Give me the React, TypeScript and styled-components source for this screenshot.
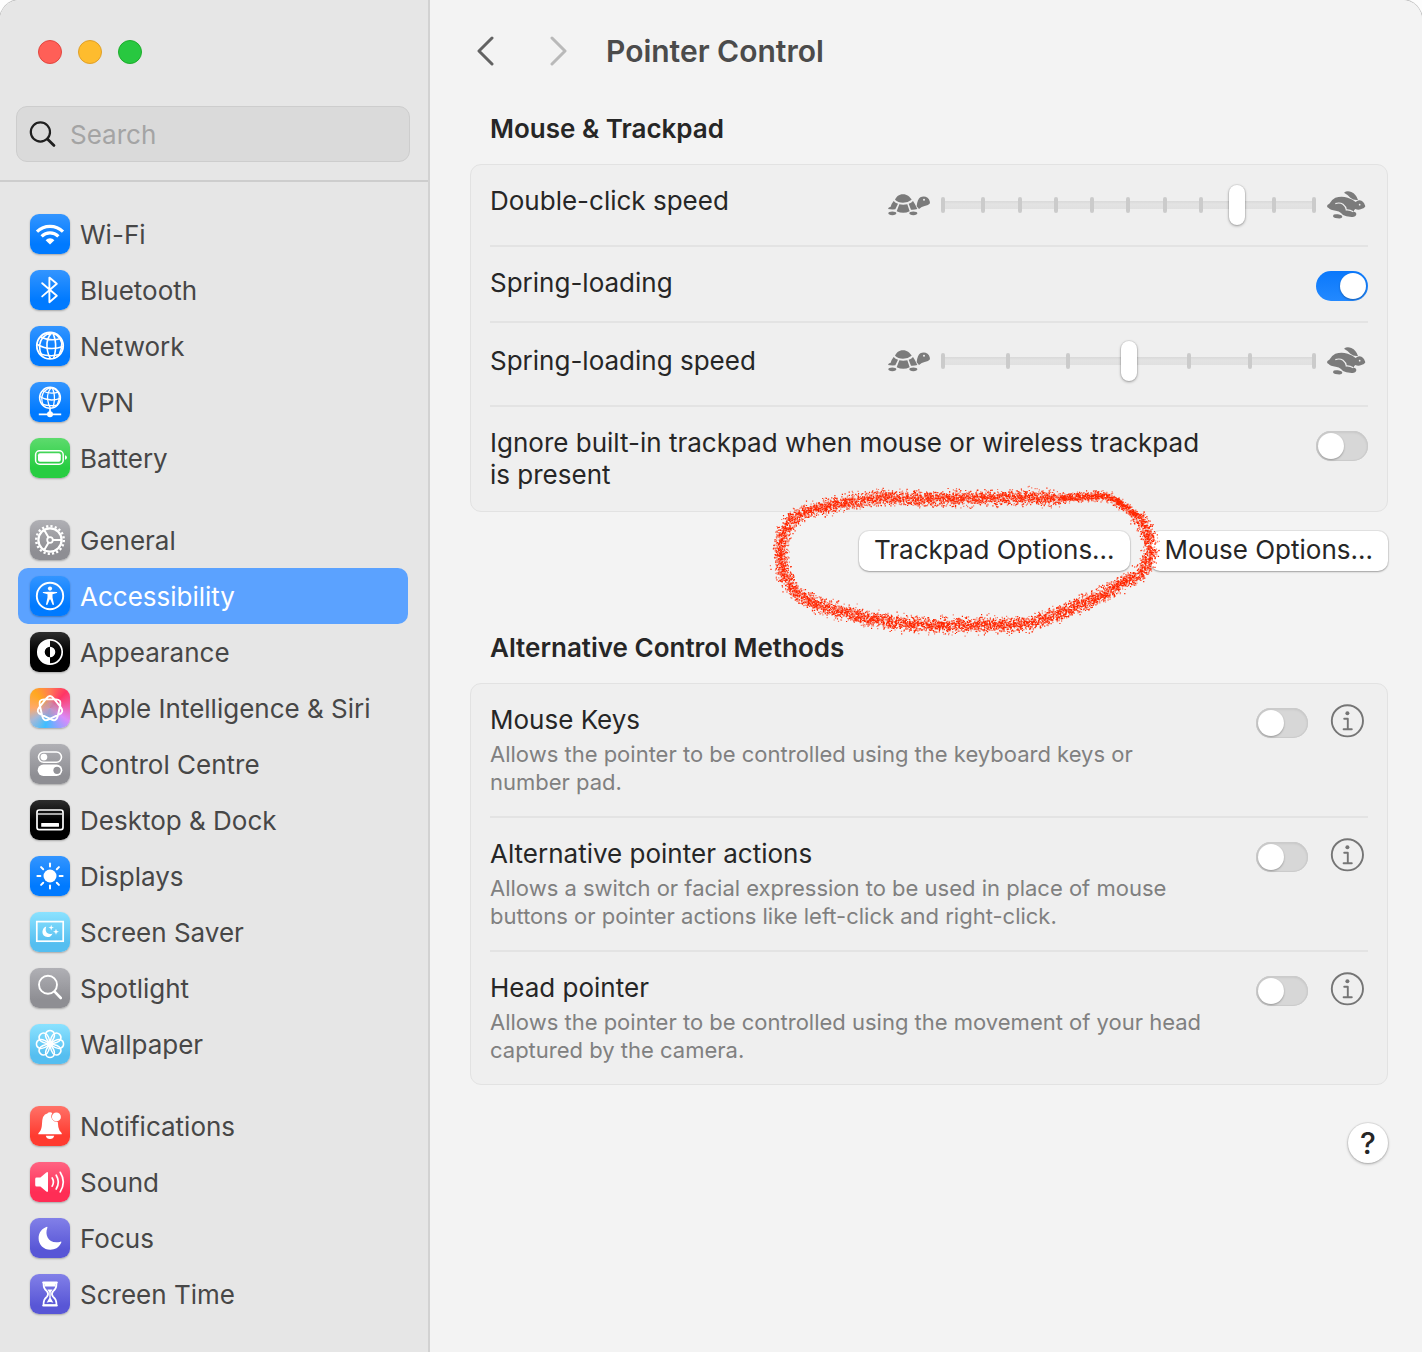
import React, { useState } from "react";
import styled, { createGlobalStyle, css } from "styled-components";

const GlobalStyle = createGlobalStyle`
  *, *::before, *::after { box-sizing: border-box; }
  body {
    margin: 0;
    background: #fdfdfd;
    font-family: Inter, "Liberation Sans", sans-serif;
    font-size: 26px;
    line-height: 32px;
    color: #262626;
  }
  button, input { font: inherit; color: inherit; }
  h1, h2, p, ul { margin: 0; padding: 0; }
`;

/* ---------- window ---------- */

const Window = styled.div`
  display: grid;
  grid-template-columns: 430px 1fr;
  min-height: 100vh;
  border-radius: 20px 20px 0 0;
  overflow: hidden;
  box-shadow: 0 0 0 1px #c4c4c4;
`;

const Sidebar = styled.aside`
  display: flex;
  flex-direction: column;
  background: #e6e6e6;
  border-right: 2px solid #d2d2d2;
`;

const Lights = styled.div`
  display: flex;
  gap: 16px;
  padding: 40px 38px 0;
`;

const Light = styled.button<{ $fill: string; $edge: string }>`
  width: 24px;
  height: 24px;
  padding: 0;
  border: 1px solid ${(p) => p.$edge};
  border-radius: 50%;
  background: ${(p) => p.$fill};
`;

const SearchBox = styled.label`
  display: flex;
  align-items: center;
  gap: 12px;
  height: 56px;
  margin: 42px 18px 18px 16px;
  padding: 0 12px;
  border: 1px solid #cdcdcd;
  border-radius: 11px;
  background: #dadada;
`;

const SearchInput = styled.input`
  flex: 1;
  min-width: 0;
  padding: 2px 0 0;
  border: 0;
  outline: 0;
  background: transparent;
  appearance: none;
  &::placeholder { color: #a4a4a4; opacity: 1; }
`;

const Nav = styled.nav`
  display: flex;
  flex-direction: column;
  gap: 26px;
  padding: 24px 20px 30px 18px;
  border-top: 2px solid #cdcdcd;
`;

const NavGroup = styled.ul`
  list-style: none;
`;

const NavLink = styled.a<{ $active?: boolean }>`
  display: flex;
  align-items: center;
  gap: 10px;
  height: 56px;
  padding: 0 12px;
  border-radius: 10px;
  color: ${(p) => (p.$active ? "#fff" : "#474747")};
  background: ${(p) => (p.$active ? "#5ba2ff" : "transparent")};
  text-decoration: none;
  white-space: nowrap;
`;

const NavText = styled.span`
  padding-top: 2px;
`;

const Tile = styled.svg<{ $bg: string }>`
  flex: none;
  width: 40px;
  height: 40px;
  border-radius: 9px;
  background: ${(p) => p.$bg};
  box-shadow: 0 1px 2px rgba(0, 0, 0, 0.28);
`;

/* ---------- content ---------- */

const Content = styled.main`
  min-width: 0;
  padding: 0 34px 40px 40px;
  background: #f3f3f3;
`;

const TitleBar = styled.header`
  display: flex;
  align-items: center;
  height: 102px;
`;

const NavButton = styled.button`
  display: flex;
  justify-content: center;
  align-items: center;
  width: 32px;
  height: 40px;
  margin-right: 40px;
  padding: 0;
  border: 0;
  background: none;
  color: #626262;
  &:disabled { color: #b9b9b9; }
`;

const Title = styled.h1`
  margin-left: -8px;
  font-size: 30px;
  line-height: 36px;
  font-weight: 600;
  color: #4b4b4b;
`;

const Section = styled.section`
  & + & { margin-top: 50px; }
`;

const SectionTitle = styled.h2`
  padding: 11px 20px 19px;
  font-size: 26px;
  line-height: 32px;
  font-weight: 600;
`;

const Card = styled.div`
  padding: 0 19px;
  border: 1px solid #e2e2e2;
  border-radius: 11px;
  background: #efefef;
`;

const Row = styled.div<{ $centered?: boolean }>`
  display: flex;
  align-items: flex-start;
  justify-content: space-between;
  gap: 24px;
  padding: 20px 0;
  ${(p) => p.$centered && css`
    align-items: center;
    padding: 18px 0 24px;
  `}
  & + & { border-top: 2px solid #e3e3e3; }
`;

const RowText = styled.div`
  display: flex;
  flex-direction: column;
  gap: 4px;
  max-width: 720px;
`;

const RowLabel = styled.label``;

const Description = styled.p`
  font-size: 22px;
  line-height: 28px;
  color: #808080;
`;

const Controls = styled.div`
  display: flex;
  flex: none;
  gap: 22px;
`;

const Toggle = styled.input`
  flex: none;
  width: 52px;
  height: 30px;
  margin: 4px 0 0;
  padding: 2px;
  border-radius: 15px;
  appearance: none;
  background: #d7d7d7;
  box-shadow: inset 0 0 0 1px #cbcbcb, inset 0 1px 3px rgba(0, 0, 0, 0.12);
  &::before {
    content: "";
    display: block;
    width: 26px;
    height: 26px;
    border-radius: 50%;
    background: #fff;
    box-shadow: 0 1px 2px rgba(0, 0, 0, 0.3);
  }
  &:checked {
    background: linear-gradient(#0a78fb, #2389ff);
    box-shadow: none;
  }
  &:checked::before { margin-left: 22px; }
`;

const InfoButton = styled.button`
  display: flex;
  width: 38px;
  height: 34px;
  padding: 0;
  border: 0;
  background: none;
  color: #757575;
`;

const SpeedControl = styled.div`
  display: flex;
  flex: none;
  align-items: center;
  gap: 9px;
  color: #7b7b7b;
`;

const SliderBox = styled.div`
  display: grid;
  align-items: center;
  width: 379px;
  height: 40px;
  & > * { grid-area: 1 / 1; }
`;

const Track = styled.div`
  height: 8px;
  margin: 0 3px;
  border-radius: 2px;
  background: linear-gradient(#d9d9d9, #e3e3e3 40%, #e0e0e0);
`;

const Ticks = styled.div`
  display: flex;
  justify-content: space-between;
  padding: 0 2px;
`;

const Tick = styled.span`
  width: 4px;
  height: 16px;
  border-radius: 2px;
  background: #cbcbcb;
  &:first-child { margin-right: 4px; }
  &:last-child { margin-left: 4px; }
`;

const Range = styled.input`
  width: 100%;
  height: 40px;
  margin: 0;
  appearance: none;
  background: transparent;
  &::-webkit-slider-thumb {
    appearance: none;
    width: 16px;
    height: 40px;
    border-radius: 8px;
    background: #fff;
    box-shadow: 0 0 0 1px rgba(0, 0, 0, 0.06), 0 1px 3px rgba(0, 0, 0, 0.35);
  }
`;

const ButtonRow = styled.div`
  position: relative;
  display: flex;
  justify-content: flex-end;
  gap: 20px;
  margin-top: 19px;
`;

const PushButton = styled.button`
  height: 40px;
  padding: 0 15px 2px;
  border: 0;
  border-radius: 10px;
  background: #fff;
  box-shadow: 0 0 0 1px rgba(0, 0, 0, 0.06), 0 1px 2px rgba(0, 0, 0, 0.3);
  white-space: nowrap;
`;

const Crayon = styled.svg`
  position: absolute;
  top: -51px;
  right: 228px;
  width: 400px;
  height: 160px;
  pointer-events: none;
`;

const Footer = styled.footer`
  display: flex;
  justify-content: flex-end;
  padding-top: 38px;
`;

const HelpButton = styled.button`
  width: 40px;
  height: 40px;
  padding: 0;
  border: 0;
  border-radius: 50%;
  background: #fff;
  box-shadow: 0 0 0 1px rgba(0, 0, 0, 0.06), 0 1px 3px rgba(0, 0, 0, 0.3);
  font-size: 30px;
  font-weight: 500;
`;

/* ---------- icons ---------- */

const BLUE = "linear-gradient(#3395ff, #007aff 75%)";
const GREEN = "linear-gradient(#5ddb6d, #27cd41 75%)";
const GREY = "linear-gradient(#b0b0b5, #8e8e93 80%)";
const BLACK = "linear-gradient(#2e2e2e, #000 50%)";
const SKY = "linear-gradient(#8be2ff, #55bef0 80%)";
const RED = "linear-gradient(#ff7268, #ff3b30 75%)";
const PINK = "linear-gradient(#ff6482, #ff2d55 75%)";
const INDIGO = "linear-gradient(#8280e8, #5856d6 80%)";
const SIRI =
  "radial-gradient(circle at 50% 52%, rgba(190,150,190,.75) 0 18%, transparent 42%), conic-gradient(from 0deg at 50% 50%, #ff7a55, #ff3565 45deg, #f060a8 85deg, #d98bfa 125deg, #7fa8ff 165deg, #3ebeff 195deg, #a5b8d8 235deg, #ffa96a 270deg, #ffa820 315deg, #ff7a55)";

const Globe = () => (
  <g fill="none" stroke="#fff" strokeWidth="1.6">
    <circle cx="20" cy="19.7" r="13.2" strokeWidth="1.8" />
    <path d="M10.5 10.8Q19 15.8 31.2 12.5M6.9 18.2Q19 25.5 33.1 20.5M9.5 27.8Q20 31.2 29.8 28.6" />
    <path d="M21.5 6.6Q11 9.5 9.5 19.5Q9.3 25 12 30M22 6.6Q16 12 17 22Q18 29 20.5 32.8M22.5 6.6Q26 13 25.6 22Q25 29 23.5 32.5M23 6.8Q30.5 11 31.8 17Q32 23 29 29" />
  </g>
);

const knot = (() => {
  const pts = Array.from({ length: 7 }, (_, i) => {
    const a = -Math.PI / 2 + (i * 4 * Math.PI) / 7;
    return [20 + 14.8 * Math.cos(a), 20.6 + 14.8 * Math.sin(a)];
  });
  const mix = (a: number[], b: number[], t: number) =>
    `${(a[0] + (b[0] - a[0]) * t).toFixed(2)} ${(a[1] + (b[1] - a[1]) * t).toFixed(2)}`;
  return (
    pts
      .map((p, i) => {
        const prev = pts[(i + 6) % 7];
        const next = pts[(i + 1) % 7];
        return `${i ? "L" : "M"}${mix(p, prev, 0.25)}Q${mix(p, p, 0)} ${mix(p, next, 0.25)}`;
      })
      .join("") + "Z"
  );
})();

const eighths = [0, 45, 90, 135, 180, 225, 270, 315];

const glyphs: Record<string, React.ReactNode> = {
  wifi: (
    <g fill="none" stroke="#fff" strokeWidth="3.2">
      <path d="M7 17.6A18.6 18.6 0 0 1 33 17.6M11.6 22.3A12 12 0 0 1 28.4 22.3" />
      <path d="M20 30.4L15.6 26.2A6.2 6.2 0 0 1 24.4 26.2Z" fill="#fff" stroke="none" />
    </g>
  ),
  bluetooth: (
    <path d="M12.2 13.2L26.8 25.8L19.4 32.2V7.6L26.8 13.8L12.2 26.4" fill="none" stroke="#fff" strokeWidth="1.9" strokeLinejoin="round" strokeLinecap="round" />
  ),
  network: <Globe />,
  vpn: (
    <>
      <g transform="translate(4.2 .2) scale(.79)"><Globe /></g>
      <path d="M20 26.5V31M8.8 32.3H31.2" stroke="#fff" strokeWidth="1.7" />
      <circle cx="20" cy="32.2" r="3" fill="#fff" />
    </>
  ),
  battery: (
    <>
      <rect x="5.6" y="12.8" width="27.6" height="13.4" rx="4" fill="none" stroke="#fff" strokeWidth="1.5" />
      <rect x="8" y="15.2" width="22.8" height="8.6" rx="2" fill="#fff" />
      <path d="M35 17.3Q36.9 17.8 36.9 19.5T35 21.7Z" fill="#fff" />
    </>
  ),
  general: (
    <g fill="none" stroke="#fff">
      <circle cx="20" cy="20" r="11.6" strokeWidth="2.2" />
      <circle cx="20" cy="20" r="13.8" strokeWidth="2.4" strokeDasharray="2.2 2.135" />
      <circle cx="20" cy="20" r="2.8" strokeWidth="1.8" />
      <path d="M22.8 20H31.5M18.6 17.6L14.2 10M18.6 22.4L14.2 30" strokeWidth="2" />
    </g>
  ),
  accessibility: (
    <>
      <circle cx="20" cy="20" r="13.2" fill="none" stroke="#fff" strokeWidth="1.9" />
      <circle cx="20" cy="12.6" r="2.1" fill="#fff" />
      <path d="M13 15.9L18.4 15.8H21.6L27 15.9Q27.6 16.8 26.8 17.1L22.5 18.2V21.5L24 28.3Q23.6 29.4 22.6 28.7L20.4 23.6H19.6L17.4 28.7Q16.4 29.4 16 28.3L17.5 21.5V18.2L13.2 17.1Q12.4 16.8 13 15.9Z" fill="#fff" />
    </>
  ),
  appearance: (
    <>
      <circle cx="20" cy="20" r="12.2" fill="none" stroke="#fff" strokeWidth="1.7" />
      <path d="M20 7.8A12.2 12.2 0 0 0 20 32.2V25.3A5.3 5.3 0 0 1 20 14.7ZM20 14.7A5.3 5.3 0 0 1 20 25.3Z" fill="#fff" />
    </>
  ),
  siri: <path d={knot} fill="none" stroke="#fff" strokeWidth="1.9" />,
  control: (
    <>
      <rect x="8.5" y="8" width="23" height="10.2" rx="5.1" fill="none" stroke="#fff" strokeWidth="1.6" />
      <circle cx="13.9" cy="13.1" r="3.4" fill="#fff" />
      <rect x="7.7" y="20.6" width="24.6" height="11.4" rx="5.7" fill="#fff" />
      <circle cx="27" cy="26.3" r="3.6" fill="#929297" />
    </>
  ),
  dock: (
    <>
      <rect x="7" y="10" width="26" height="19.6" rx="2.2" fill="none" stroke="#fff" strokeWidth="1.7" />
      <path d="M7.8 14H32.2" stroke="#ddd" strokeWidth="1.7" />
      <rect x="11.2" y="23" width="17.8" height="3.8" rx=".6" fill="#fff" />
    </>
  ),
  displays: (
    <>
      <circle cx="20" cy="20" r="6.5" fill="#fff" />
      {eighths.map((a) => (
        <path key={a} d="M20 7.4V10.4" stroke="#fff" strokeWidth="2" strokeLinecap="round" transform={`rotate(${a} 20 20)`} />
      ))}
    </>
  ),
  saver: (
    <>
      <rect x="6.8" y="9.6" width="26.4" height="19.6" fill="none" stroke="#fff" strokeWidth="1.7" />
      <path d="M16.2 14.4Q14.6 19.6 18 21.6Q20 22.6 22.6 21.4Q21.2 25 17.4 25Q12.6 24.6 12.4 20Q12.6 15.8 16.2 14.4Z" fill="#fff" />
      <path d="M21.2 12.8L21.9 14.9L24 15.6L21.9 16.3L21.2 18.4L20.5 16.3L18.4 15.6L20.5 14.9ZM26 16.8L26.8 19L29 19.8L26.8 20.6L26 22.8L25.2 20.6L23 19.8L25.2 19Z" fill="#fff" />
    </>
  ),
  spotlight: (
    <g fill="none" stroke="#fff" strokeLinecap="round">
      <circle cx="18" cy="16.8" r="9" strokeWidth="1.9" />
      <path d="M24.6 23.6L30.8 30" strokeWidth="2.6" />
    </g>
  ),
  wallpaper: (
    <g fill="none" stroke="#fff" strokeWidth="1.5">
      {eighths.map((a) => (
        <path key={a} d="M20 20Q14.6 13.4 15.7 9.6A4.5 4.5 0 0 1 24.3 9.6Q25.4 13.4 20 20Z" transform={`rotate(${a} 20 20)`} />
      ))}
      <circle cx="20" cy="20" r="2.4" />
    </g>
  ),
  bell: (
    <>
      <path d="M8.3 28.2Q8 27.2 9.2 26.2Q11.6 24 11.9 19Q12 8.2 17.3 7.6Q18.2 6.2 20 6.2Q21.6 6.3 22.3 7.2A5.6 5.6 0 0 0 27.8 15.9Q28 21.5 29.5 24.5L31.4 26.8Q32 27.6 31.7 28.2Z" fill="#fff" />
      <path d="M15.8 29.8H24.2Q23.4 33 20 33T15.8 29.8Z" fill="#fff" />
      <circle cx="26.4" cy="10.9" r="4.5" fill="#fff" />
    </>
  ),
  sound: (
    <>
      <path d="M5.2 17Q5.2 15.6 6.6 15.6H10.4L16.3 10.5Q18 9.4 18 11.2V28.8Q18 30.6 16.3 29.5L10.4 24.6H6.6Q5.2 24.6 5.2 23Z" fill="#fff" />
      <path d="M22.2 16Q24.6 20 22.2 24.2M26.2 13.2Q30.4 20 26.2 27M30.2 10.3Q36.4 20 30.2 29.9" fill="none" stroke="#fff" strokeWidth="1.7" strokeLinecap="round" />
    </>
  ),
  focus: (
    <path d="M17 8.8Q17.8 8.8 17.3 9.9C14.5 17 18.5 26.2 29.8 23.9Q32 23 31.2 24.8C28.7 30 24.8 31.7 20.4 31.7C13.6 31.7 8.6 26.8 8.6 20.2C8.6 14.8 12 10.3 17 8.8Z" fill="#fff" />
  ),
  time: (
    <>
      <path d="M13.2 8.5H26.8M13.2 31.5H26.8" stroke="#fff" strokeWidth="2" strokeLinecap="round" />
      <path d="M13.6 9V11Q13.6 14.5 17 17.4Q19.2 20 17 22.6Q13.6 25.5 13.6 29V31H26.4V29Q26.4 25.5 23 22.6Q20.8 20 23 17.4Q26.4 14.5 26.4 11V9Z" fill="none" stroke="#fff" strokeWidth="1.7" />
      <path d="M14.4 8.8H25.6V12.6H14.4ZM17.4 15.6H22.6L20.7 18.6V24L23.4 28.8Q20 27.2 16.6 28.8L19.3 24V18.6Z" fill="#fff" />
    </>
  ),
};

const Turtle = () => (
  <svg width="42" height="22" viewBox="0 0 126 66" fill="currentColor" aria-hidden="true">
    <path d="M21 17C26 8 32 1 45 1S64 8 71 17Q60 26 45 26T21 17Z" />
    <path d="M17 21Q22 27 30 29L22 46Q10 47 0 45Q1 39 8 38Q11 28 17 21Z" />
    <path d="M34 31Q45 33 58 31L65 52Q46 61 26 52Z" />
    <path d="M62 29Q70 27 75 21Q81 29 88 45Q78 48 69 47Z" />
    <ellipse cx="13" cy="58" rx="12" ry="5.5" />
    <ellipse cx="76" cy="58" rx="12" ry="5.5" />
    <path d="M86 37Q88 16 97 10Q104 6 113 8Q126 13 126 28Q122 35 110 36Q101 38 93 45Z" />
    <circle cx="108" cy="17" r="3" fill="#efefef" />
  </svg>
);

const Hare = () => (
  <svg width="41" height="28" viewBox="0 0 123 84" fill="currentColor" aria-hidden="true">
    <path d="M51 5Q60-2 73 3Q88 10 93 27Q80 29 70 20Q61 10 51 5Z" />
    <path d="M0 45Q1 40 7 38Q13 26 25 20Q44 14 62 20Q76 24 86 33Q94 25 105 30Q113 35 115 46Q113 53 103 54Q94 58 85 54Q80 58 80 62Q88 62 88 70Q86 79 74 78L58 76Q48 75 42 66Q36 60 26 59Q10 57 5 51Q0 49 0 45Z" />
    <path d="M25 38Q38 33 48 40Q57 47 58 57Q68 56 79 62" fill="none" stroke="#efefef" strokeWidth="3.5" />
    <ellipse cx="32" cy="76" rx="14" ry="6" transform="rotate(8 32 76)" />
    <circle cx="98" cy="41" r="2.6" fill="#efefef" />
  </svg>
);

const InfoGlyph = () => (
  <svg width="34" height="34" viewBox="0 0 34 34" fill="none" stroke="currentColor" aria-hidden="true">
    <circle cx="17.4" cy="16.8" r="15.6" strokeWidth="1.9" />
    <path d="M14.2 14.7H17.8V25M13.6 25.2H21.8" strokeWidth="1.9" strokeLinecap="round" strokeLinejoin="round" />
    <circle cx="17.4" cy="9.2" r="2" fill="currentColor" stroke="none" />
  </svg>
);

/* Grainy crayon loop: specks scattered around a hand-drawn outline. */
const outline = [
  [1040, 48], [1000, 49], [950, 52], [900, 55], [825, 54], [750, 52], [675, 54], [600, 55], [540, 56], [480, 57],
  [430, 54], [380, 52], [300, 60], [220, 75], [150, 90], [105, 108], [78, 140], [63, 180], [58, 220],
  [65, 270], [85, 315], [112, 345], [160, 370], [220, 390], [300, 410], [380, 425], [460, 433],
  [540, 437], [620, 436], [700, 434], [790, 435], [850, 418], [920, 390], [1000, 358], [1080, 315],
  [1145, 278], [1168, 235], [1170, 200], [1160, 150], [1130, 108], [1075, 68], [1040, 48],
];

const specks = (() => {
  let seed = 7;
  const rnd = () => {
    seed = (seed * 16807) % 2147483647;
    return seed / 2147483647;
  };
  const layers = ["", ""];
  for (let i = 1; i < outline.length; i++) {
    const [x0, y0] = outline[i - 1];
    const [x1, y1] = outline[i];
    const len = Math.hypot(x1 - x0, y1 - y0);
    const spread = x0 > 940 && y0 < 120 ? 6.5 : 11;
    const count = Math.round(len * 3.8);
    for (let n = 0; n < count; n++) {
      const t = rnd();
      const off = (rnd() + rnd() + rnd() + rnd() - 2) * spread * 1.7;
      const x = (x0 + (x1 - x0) * t - ((y1 - y0) / len) * off) / 3;
      const y = (y0 + (y1 - y0) * t + ((x1 - x0) / len) * off) / 3;
      layers[n % 2] += `M${x.toFixed(1)} ${y.toFixed(1)}h1.2`;
    }
  }
  return layers;
})();

/* ---------- data ---------- */

const groups = [
  [
    ["Wi-Fi", "wifi", BLUE],
    ["Bluetooth", "bluetooth", BLUE],
    ["Network", "network", BLUE],
    ["VPN", "vpn", BLUE],
    ["Battery", "battery", GREEN],
  ],
  [
    ["General", "general", GREY],
    ["Accessibility", "accessibility", BLUE],
    ["Appearance", "appearance", BLACK],
    ["Apple Intelligence & Siri", "siri", SIRI],
    ["Control Centre", "control", GREY],
    ["Desktop & Dock", "dock", BLACK],
    ["Displays", "displays", BLUE],
    ["Screen Saver", "saver", SKY],
    ["Spotlight", "spotlight", GREY],
    ["Wallpaper", "wallpaper", SKY],
  ],
  [
    ["Notifications", "bell", RED],
    ["Sound", "sound", PINK],
    ["Focus", "focus", INDIGO],
    ["Screen Time", "time", INDIGO],
  ],
];

const methods = [
  ["mouse-keys", "Mouse Keys", "Allows the pointer to be controlled using the keyboard keys or number pad."],
  ["pointer-actions", "Alternative pointer actions", "Allows a switch or facial expression to be used in place of mouse buttons or pointer actions like left-click and right-click."],
  ["head-pointer", "Head pointer", "Allows the pointer to be controlled using the movement of your head captured by the camera."],
];

function SpeedSlider({ id, steps, initial }: { id: string; steps: number; initial: number }) {
  const [value, setValue] = useState(initial);
  return (
    <SpeedControl>
      <Turtle />
      <SliderBox>
        <Track />
        <Ticks>
          {Array.from({ length: steps + 1 }, (_, i) => <Tick key={i} />)}
        </Ticks>
        <Range id={id} type="range" min={0} max={steps} value={value} onChange={(e) => setValue(Number(e.target.value))} />
      </SliderBox>
      <Hare />
    </SpeedControl>
  );
}

export default function App() {
  return (
    <>
      <GlobalStyle />
      <Window>
        <Sidebar>
          <Lights>
            <Light $fill="#ff5f57" $edge="#e2463f" aria-label="Close" />
            <Light $fill="#febc2e" $edge="#e0a028" aria-label="Minimise" />
            <Light $fill="#28c840" $edge="#1dad2b" aria-label="Zoom" />
          </Lights>
          <SearchBox>
            <svg width="29" height="28" viewBox="0 0 29 28" fill="none" stroke="#1f1f1f" strokeLinecap="round" aria-hidden="true">
              <circle cx="11.4" cy="12" r="9.6" strokeWidth="2.2" />
              <path d="M18.4 19L25 25.4" strokeWidth="2.8" />
            </svg>
            <SearchInput type="search" placeholder="Search" aria-label="Search" />
          </SearchBox>
          <Nav aria-label="Settings">
            {groups.map((items, i) => (
              <NavGroup key={i}>
                {items.map(([label, icon, bg]) => (
                  <li key={label}>
                    <NavLink href={`#${icon}`} $active={label === "Accessibility"}>
                      <Tile $bg={bg} viewBox="0 0 40 40" aria-hidden="true">{glyphs[icon]}</Tile>
                      <NavText>{label}</NavText>
                    </NavLink>
                  </li>
                ))}
              </NavGroup>
            ))}
          </Nav>
        </Sidebar>

        <Content>
          <TitleBar>
            <NavButton aria-label="Back">
              <svg width="18" height="30" viewBox="0 0 18 30" fill="none" stroke="currentColor" strokeWidth="3" strokeLinecap="round" strokeLinejoin="round">
                <path d="M15 2L2 15L15 28" />
              </svg>
            </NavButton>
            <NavButton aria-label="Forward" disabled>
              <svg width="18" height="30" viewBox="0 0 18 30" fill="none" stroke="currentColor" strokeWidth="3" strokeLinecap="round" strokeLinejoin="round">
                <path d="M3 2L16 15L3 28" />
              </svg>
            </NavButton>
            <Title>Pointer Control</Title>
          </TitleBar>

          <Section>
            <SectionTitle>Mouse &amp; Trackpad</SectionTitle>
            <Card>
              <Row>
                <RowLabel htmlFor="double-click">Double-click speed</RowLabel>
                <SpeedSlider id="double-click" steps={10} initial={8} />
              </Row>
              <Row>
                <RowLabel htmlFor="spring">Spring-loading</RowLabel>
                <Toggle id="spring" type="checkbox" role="switch" defaultChecked />
              </Row>
              <Row $centered>
                <RowLabel htmlFor="spring-speed">Spring-loading speed</RowLabel>
                <SpeedSlider id="spring-speed" steps={6} initial={3} />
              </Row>
              <Row>
                <RowText>
                  <RowLabel htmlFor="ignore">Ignore built-in trackpad when mouse or wireless trackpad is present</RowLabel>
                </RowText>
                <Toggle id="ignore" type="checkbox" role="switch" />
              </Row>
            </Card>
            <ButtonRow>
              <PushButton>Trackpad Options…</PushButton>
              <PushButton>Mouse Options…</PushButton>
              <Crayon viewBox="0 0 400 160" fill="none" stroke="#ff2600" strokeWidth="1.2" aria-hidden="true">
                <path d={specks[1]} strokeOpacity=".6" />
                <path d={specks[0]} />
              </Crayon>
            </ButtonRow>
          </Section>

          <Section>
            <SectionTitle>Alternative Control Methods</SectionTitle>
            <Card>
              {methods.map(([id, label, text]) => (
                <Row key={id}>
                  <RowText>
                    <RowLabel htmlFor={id}>{label}</RowLabel>
                    <Description id={`${id}-text`}>{text}</Description>
                  </RowText>
                  <Controls>
                    <Toggle id={id} type="checkbox" role="switch" aria-describedby={`${id}-text`} />
                    <InfoButton aria-label={`About ${label}`}><InfoGlyph /></InfoButton>
                  </Controls>
                </Row>
              ))}
            </Card>
          </Section>

          <Footer>
            <HelpButton aria-label="Help">?</HelpButton>
          </Footer>
        </Content>
      </Window>
    </>
  );
}
